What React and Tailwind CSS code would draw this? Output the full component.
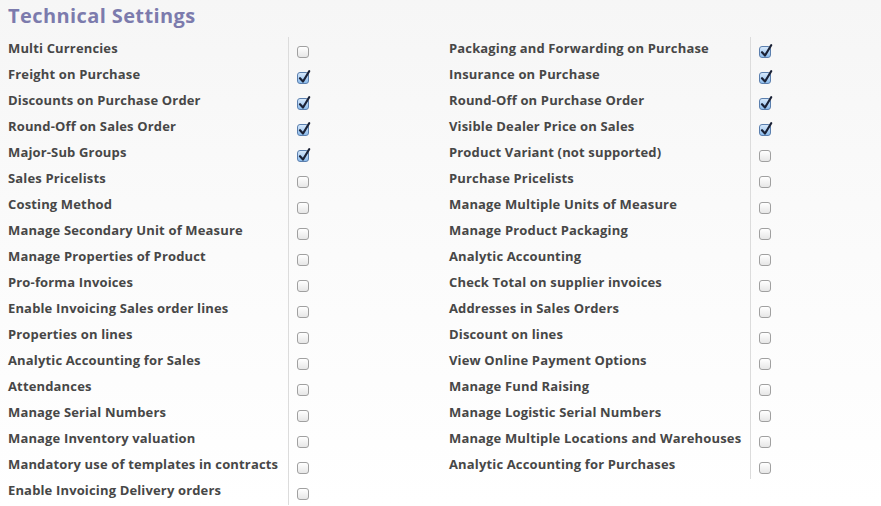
import React from "react";

const left = [
  ["Multi Currencies", false],
  ["Freight on Purchase", true],
  ["Discounts on Purchase Order", true],
  ["Round-Off on Sales Order", true],
  ["Major-Sub Groups", true],
  ["Sales Pricelists", false],
  ["Costing Method", false],
  ["Manage Secondary Unit of Measure", false],
  ["Manage Properties of Product", false],
  ["Pro-forma Invoices", false],
  ["Enable Invoicing Sales order lines", false],
  ["Properties on lines", false],
  ["Analytic Accounting for Sales", false],
  ["Attendances", false],
  ["Manage Serial Numbers", false],
  ["Manage Inventory valuation", false],
  ["Mandatory use of templates in contracts", false],
  ["Enable Invoicing Delivery orders", false],
];

const right = [
  ["Packaging and Forwarding on Purchase", true],
  ["Insurance on Purchase", true],
  ["Round-Off on Purchase Order", true],
  ["Visible Dealer Price on Sales", true],
  ["Product Variant (not supported)", false],
  ["Purchase Pricelists", false],
  ["Manage Multiple Units of Measure", false],
  ["Manage Product Packaging", false],
  ["Analytic Accounting", false],
  ["Check Total on supplier invoices", false],
  ["Addresses in Sales Orders", false],
  ["Discount on lines", false],
  ["View Online Payment Options", false],
  ["Manage Fund Raising", false],
  ["Manage Logistic Serial Numbers", false],
  ["Manage Multiple Locations and Warehouses", false],
  ["Analytic Accounting for Purchases", false],
];

function Box({ checked }) {
  if (checked) {
    return (
      <span className="relative inline-block w-[12px] h-[12px] rounded-[3px] border border-[#5b7fae] bg-gradient-to-b from-[#d6e8fb] to-[#8dbcec]">
        <svg className="absolute left-[0px] top-[-3px]" width="13" height="14" viewBox="0 0 13 14">
          <path d="M2 8.2 L5 11.5 L11.2 1.2" fill="none" stroke="#1b2236" strokeWidth="2.2" strokeLinecap="round" strokeLinejoin="round" />
        </svg>
      </span>
    );
  }
  return (
    <span className="inline-block w-[12px] h-[12px] rounded-[3px] border border-[#a0a0a0] bg-gradient-to-b from-[#ffffff] to-[#e6e6e6]" />
  );
}

export default function App() {
  const rows = [];
  for (let i = 0; i < left.length; i++) {
    const l = left[i];
    const r = right[i];
    rows.push(
      <div key={i} className="grid grid-cols-[288px_153px_309px_1fr] h-[26px]">
        <div className="pl-[8px] pt-[3px] leading-[16px] tracking-[0.15px]">{l[0]}</div>
        <div className="border-l border-[#dcdcdc] pl-[8px] pt-[9px] leading-none">
          <Box checked={l[1]} />
        </div>
        <div className="pl-[8px] pt-[3px] leading-[16px] tracking-[0.15px]">{r ? r[0] : ""}</div>
        <div className={(r ? "border-l border-[#dcdcdc] " : "") + "pl-[8px] pt-[9px] leading-none"}>
          {r ? <Box checked={r[1]} /> : null}
        </div>
      </div>
    );
  }
  return (
    <div
      className="w-[881px] h-[506px] overflow-hidden bg-gradient-to-b from-[#f6f6f6] via-[#fbfbfb] to-white text-[#474747] text-[13px] font-bold"
      style={{ fontFamily: '"Open Sans", "DejaVu Sans", sans-serif' }}
    >
      <div className="h-[37px] pl-[8px] pt-[2px] text-[20px] leading-[28px] tracking-[0.4px] text-[#7c7bad]">
        Technical Settings
      </div>
      <div>{rows}</div>
    </div>
  );
}
